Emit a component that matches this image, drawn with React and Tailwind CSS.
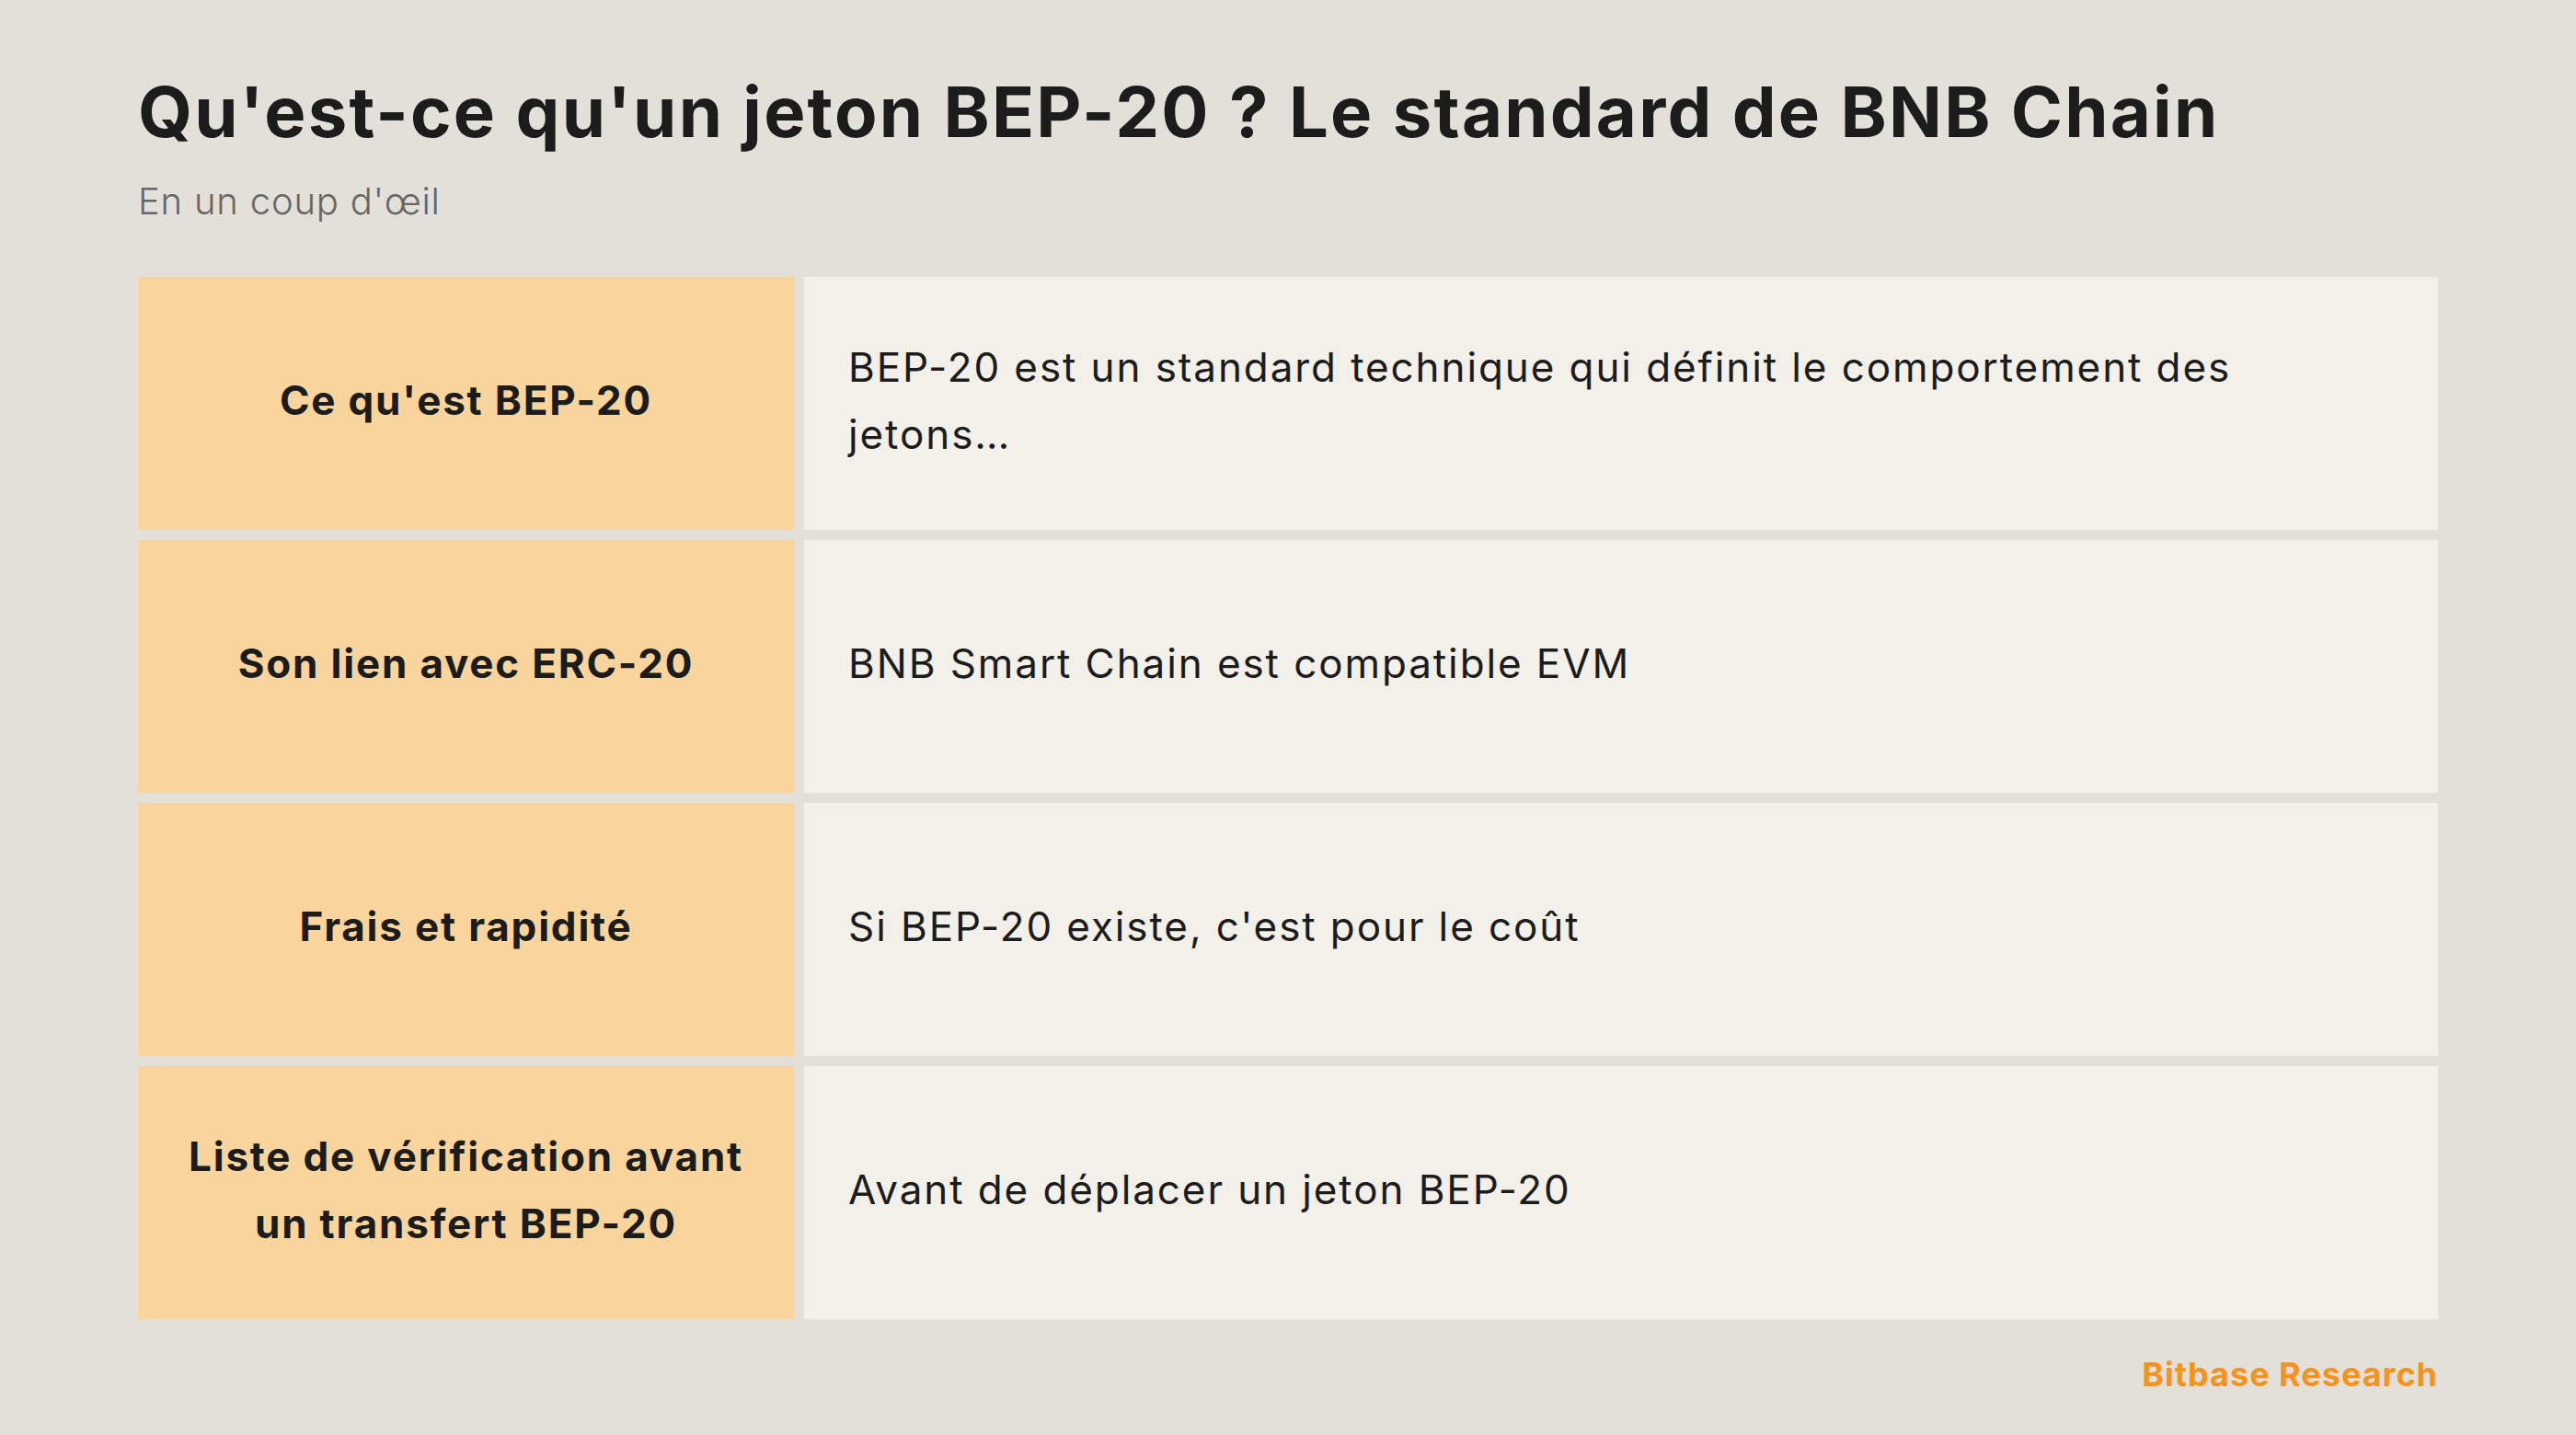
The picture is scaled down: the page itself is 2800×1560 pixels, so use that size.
import React from "react";

const rows = [
  { k: "Ce qu'est BEP-20", v: "BEP-20 est un standard technique qui définit le comportement des jetons…" },
  { k: "Son lien avec ERC-20", v: "BNB Smart Chain est compatible EVM" },
  { k: "Frais et rapidité", v: "Si BEP-20 existe, c'est pour le coût" },
  { k: "Liste de vérification avant un transfert BEP-20", v: "Avant de déplacer un jeton BEP-20" },
];

export default function App() {
  return (
    <div
      className="w-[2800px] h-[1560px] bg-[#e3dfd9] text-[#1c1c1c] px-[150px] pt-[68px]"
      style={{ fontFamily: "Inter, 'Noto Sans', sans-serif" }}
    >
      <h1 className="text-[76px] leading-[106px] font-bold tracking-[2.2px]">
        Qu'est-ce qu'un jeton BEP-20 ? Le standard de BNB Chain
      </h1>
      <p className="mt-[17px] text-[40px] leading-[56px] text-[#666666] font-light tracking-[0.8px]">En un coup d'œil</p>
      <div className="mt-[54px] grid grid-cols-[713px_1fr] gap-[11px]">
        {rows.map((r, i) => (
          <React.Fragment key={i}>
            <div className="h-[275px] bg-[#f9d49c] flex items-center justify-center px-[40px] pb-[6px] text-center">
              <span className="text-[44px] leading-[73px] font-bold tracking-[1.8px]">{r.k}</span>
            </div>
            <div className="h-[275px] bg-[#f3f0e9] flex items-center pl-[48px] pr-[120px] pb-[6px]">
              <span className="text-[44px] leading-[73px] tracking-[1.9px]">{r.v}</span>
            </div>
          </React.Fragment>
        ))}
      </div>
      <div className="mt-[35px] text-right text-[36px] leading-[50px] font-bold text-[#f7931a] tracking-[1px]">Bitbase Research</div>
    </div>
  );
}
